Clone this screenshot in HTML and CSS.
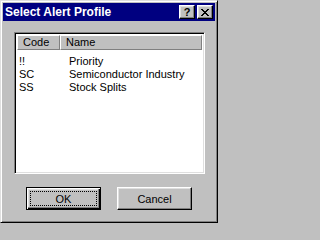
FILE: index.html
```html
<!DOCTYPE html>
<html>
<head>
<meta charset="utf-8">
<link rel="stylesheet" href="styles.css">
</head>
<body>
<div class="window">
  <div class="titlebar">
    <span class="title">Select Alert Profile</span>
    <div class="tbtns">
      <div class="tbtn">?</div>
      <div class="tbtn close">
        <svg width="8" height="7" viewBox="0 0 8 7"><path d="M0 0h2v1h-2zM6 0h2v1h-2zM1 1h2v1h-2zM5 1h2v1h-2zM2 2h4v1h-4zM3 3h2v1h-2zM2 4h4v1h-4zM1 5h2v1h-2zM5 5h2v1h-2zM0 6h2v1h-2zM6 6h2v1h-2z" fill="#000"/></svg>
      </div>
    </div>
  </div>
  <div class="content">
    <div class="list">
      <div class="header">
        <div class="hcell code">Code</div>
        <div class="hcell name">Name</div>
      </div>
      <div class="rows">
        <div class="row"><span class="c1">!!</span><span class="c2">Priority</span></div>
        <div class="row"><span class="c1">SC</span><span class="c2">Semiconductor Industry</span></div>
        <div class="row"><span class="c1">SS</span><span class="c2">Stock Splits</span></div>
      </div>
    </div>
    <div class="buttons">
      <div class="btn default"><div class="inner"><div class="focus">OK</div></div></div>
      <div class="btn"><div class="inner">Cancel</div></div>
    </div>
  </div>
</div>
</body>
</html>
```

FILE: styles.css
```css
html, body {
  margin: 0;
  padding: 0;
  background: #c0c0c0;
}
body {
  font-family: "Liberation Sans", Arial, sans-serif;
  font-size: 11px;
  color: #000;
}
.window {
  width: 218px;
  height: 223px;
  box-sizing: border-box;
  background: #c0c0c0;
  border-top: 1px solid #dfdfdf;
  border-left: 1px solid #dfdfdf;
  border-right: 1px solid #000;
  border-bottom: 1px solid #000;
  box-shadow: inset 1px 1px 0 #fff, inset -1px -1px 0 #808080;
  padding: 2px;
  display: flex;
  flex-direction: column;
}
.titlebar {
  height: 18px;
  background: #000080;
  display: flex;
  align-items: center;
  justify-content: space-between;
  padding: 0 2px 0 2px;
}
.title {
  color: #fff;
  font-weight: bold;
  font-size: 12px;
}
.tbtns {
  display: flex;
  gap: 2px;
}
.tbtn {
  width: 16px;
  height: 14px;
  box-sizing: border-box;
  background: #c0c0c0;
  border-top: 1px solid #fff;
  border-left: 1px solid #fff;
  border-right: 1px solid #000;
  border-bottom: 1px solid #000;
  box-shadow: inset -1px -1px 0 #808080, inset 1px 1px 0 #dfdfdf;
  display: flex;
  align-items: center;
  justify-content: center;
  font-weight: bold;
  font-size: 11px;
  line-height: 12px;
}
.close svg { display: block; }
.content {
  flex: 1;
  padding: 11px 10px 0 11px;
  display: flex;
  flex-direction: column;
}
.list {
  height: 142px;
  box-sizing: border-box;
  background: #fff;
  border-top: 1px solid #808080;
  border-left: 1px solid #808080;
  border-right: 1px solid #fff;
  border-bottom: 1px solid #fff;
  box-shadow: inset 1px 1px 0 #000, inset -1px -1px 0 #dfdfdf;
  padding: 2px;
}
.header {
  display: flex;
  height: 15px;
}
.hcell {
  box-sizing: border-box;
  background: #c0c0c0;
  border-top: 1px solid #fff;
  border-left: 1px solid #fff;
  border-right: 1px solid #808080;
  border-bottom: 1px solid #808080;
  line-height: 13px;
  padding-left: 5px;
}
.hcell.code { width: 43px; }
.hcell.name { flex: 1; }
.rows {
  padding-top: 5px;
}
.row {
  display: flex;
  line-height: 13px;
  height: 13px;
}
.c1 {
  width: 50px;
  padding-left: 2px;
}
.buttons {
  display: flex;
  gap: 16px;
  margin-top: 13px;
  padding-left: 12px;
}
.btn {
  width: 75px;
  height: 23px;
  box-sizing: border-box;
  background: #c0c0c0;
  border-top: 1px solid #fff;
  border-left: 1px solid #fff;
  border-right: 1px solid #000;
  border-bottom: 1px solid #000;
  box-shadow: inset -1px -1px 0 #808080, inset 1px 1px 0 #dfdfdf;
}
.btn .inner {
  height: 100%;
  display: flex;
  align-items: center;
  justify-content: center;
}
.btn.default {
  border: 1px solid #000;
  box-shadow: inset 1px 1px 0 #fff, inset -1px -1px 0 #000, inset -2px -2px 0 #808080, inset 2px 2px 0 #dfdfdf;
}
.btn.default .inner {
  padding: 3px;
  box-sizing: border-box;
}
.focus {
  width: 100%;
  height: 100%;
  box-sizing: border-box;
  border: 1px dotted #000;
  display: flex;
  align-items: center;
  justify-content: center;
}
```
